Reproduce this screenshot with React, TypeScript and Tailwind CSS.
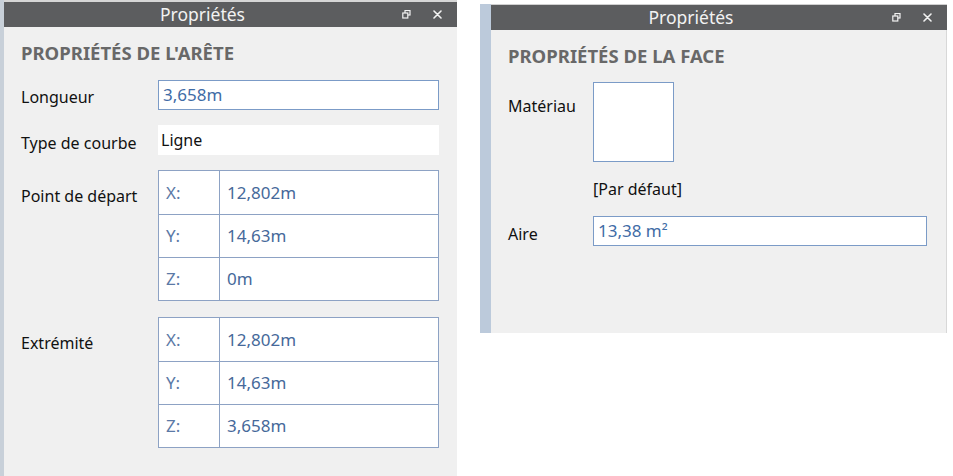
import React from "react";

const font = { fontFamily: '"Noto Sans", "Open Sans", "Liberation Sans", sans-serif' };

function RestoreIcon() {
  return (
    <svg width="9" height="9" viewBox="0 0 9 9" className="block">
      <rect x="3" y="0.5" width="5" height="4.5" fill="none" stroke="#f2f2f2" strokeWidth="1.2" />
      <rect x="0.8" y="3" width="5" height="5" fill="#5c5d5f" stroke="#f2f2f2" strokeWidth="1.2" />
    </svg>
  );
}

function CloseIcon() {
  return (
    <svg width="9" height="9" viewBox="0 0 9 9" className="block">
      <path d="M1 1 L8 8 M8 1 L1 8" stroke="#f2f2f2" strokeWidth="1.6" strokeLinecap="round" />
    </svg>
  );
}

function TitleBar() {
  return (
    <div className="flex h-[25px] items-center bg-[#5c5d5f] text-[#f2f2f2]">
      <div className="flex-1 text-center text-[17.5px] leading-[25px]">Propriétés</div>
      <div className="flex w-[56px] items-center">
        <div className="ml-[1px]"><RestoreIcon /></div>
        <div className="ml-[22px]"><CloseIcon /></div>
      </div>
    </div>
  );
}

function CoordTable({ rows }: { rows: [string, string][] }) {
  return (
    <div className="w-[281px] border border-[#8da2c4] bg-white">
      {rows.map(([k, v], i) => (
        <div
          key={k}
          className={`flex h-[43px] items-center ${i > 0 ? "border-t border-[#8da2c4]" : ""}`}
        >
          <div className="flex h-full w-[61px] items-center border-r border-[#8da2c4] pl-[7px] text-[17px] text-[#5b79a6]">
            {k}
          </div>
          <div className="pl-[7px] text-[17px] text-[#46699a]">{v}</div>
        </div>
      ))}
    </div>
  );
}

export default function App() {
  return (
    <div className="flex h-[476px] w-[953px] overflow-hidden bg-white" style={font}>
      {/* Left panel */}
      <div className="flex h-full w-[457px]">
        <div className="w-[4px] bg-[#c8d0d9]" />
        <div className="flex flex-1 flex-col">
          <div className="h-[2px] bg-[#d6d6d6]" />
          <TitleBar />
          <div className="flex-1 bg-[#f0f0f0] pl-[17px] pt-[15px]">
            <div className="text-[18.5px] font-bold leading-[22px] text-[#686868]">
              PROPRIÉTÉS DE L'ARÊTE
            </div>
            <div className="mt-[16px] flex">
              <div className="w-[137px] pt-[7px] text-[16px] leading-[20px] text-[#111]">Longueur</div>
              <div className="flex h-[30px] w-[281px] items-center border border-[#7b9bc7] bg-white pl-[4px] text-[17px] text-[#3f6ca6]">
                3,658m
              </div>
            </div>
            <div className="mt-[15px] flex">
              <div className="w-[137px] pt-[8px] text-[16px] leading-[20px] text-[#111]">Type de courbe</div>
              <div className="flex h-[30px] w-[281px] items-center bg-white pl-[3px] text-[16px] text-[#111]">
                Ligne
              </div>
            </div>
            <div className="mt-[15px] flex">
              <div className="w-[137px] pt-[16px] text-[16px] leading-[20px] text-[#111]">Point de départ</div>
              <CoordTable rows={[["X:", "12,802m"], ["Y:", "14,63m"], ["Z:", "0m"]]} />
            </div>
            <div className="mt-[16px] flex">
              <div className="w-[137px] pt-[16px] text-[16px] leading-[20px] text-[#111]">Extrémité</div>
              <CoordTable rows={[["X:", "12,802m"], ["Y:", "14,63m"], ["Z:", "3,658m"]]} />
            </div>
          </div>
        </div>
      </div>

      {/* Right panel */}
      <div className="ml-[23px] flex h-[333px] w-[467px]">
        <div className="mt-[4px] w-[11px] bg-[#bccadb]" />
        <div className="flex flex-1 flex-col">
          <div className="h-[4px] bg-white" />
          <div className="h-[1px] bg-[#d0d0d0]" />
          <TitleBar />
          <div className="flex-1 border-r border-[#d8d8d8] bg-[#f0f0f0] pl-[17px] pt-[15px]">
            <div className="text-[18.5px] font-bold leading-[22px] text-[#686868]">
              PROPRIÉTÉS DE LA FACE
            </div>
            <div className="mt-[15px] flex">
              <div className="w-[85px] pt-[14px] text-[16px] leading-[20px] text-[#111]">Matériau</div>
              <div className="h-[80px] w-[81px] border border-[#7b9bc7] bg-white" />
            </div>
            <div className="ml-[85px] mt-[17px] text-[16px] leading-[20px] text-[#111]">[Par défaut]</div>
            <div className="mt-[17px] flex">
              <div className="w-[85px] pt-[8px] text-[16px] leading-[20px] text-[#111]">Aire</div>
              <div className="flex h-[30px] w-[334px] items-center border border-[#7b9bc7] bg-white pl-[4px] text-[17px] text-[#3f6ca6]">
                13,38 m²
              </div>
            </div>
          </div>
        </div>
      </div>
    </div>
  );
}
